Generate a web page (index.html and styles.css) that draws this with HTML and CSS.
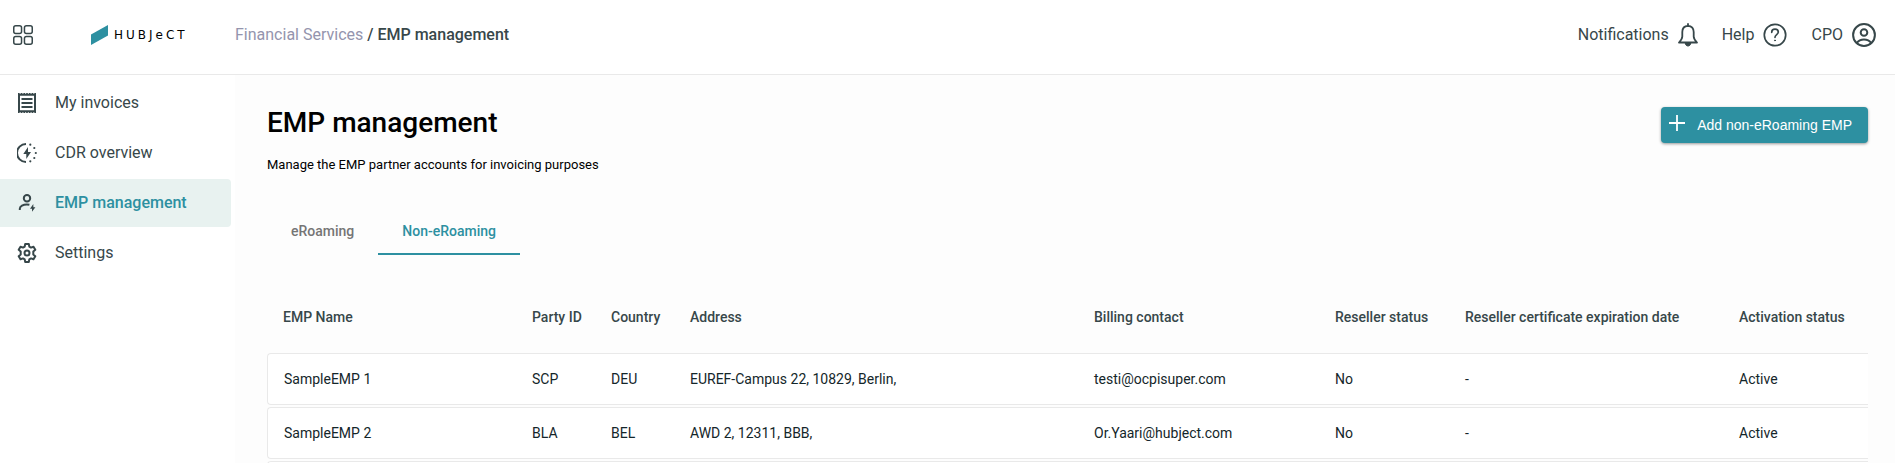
FILE: index.html
```html
<!DOCTYPE html>
<html lang="en">
<head>
    <meta charset="UTF-8">
    <meta name="viewport" content="width=device-width, initial-scale=1.0">
    <title>EMP management</title>
    <link rel="stylesheet" href="styles.css">
</head>
<body>
    <header class="topbar">
        <button class="icon-button" type="button" aria-label="Apps">
            <svg width="20" height="20" viewBox="0 0 20 20" fill="none" stroke="currentColor" stroke-width="1.5">
                <rect x="0.75" y="0.75" width="7.8" height="7.8" rx="2"/>
                <rect x="11.45" y="0.75" width="7.8" height="7.8" rx="2"/>
                <rect x="0.75" y="11.45" width="7.8" height="7.8" rx="2"/>
                <rect x="11.45" y="11.45" width="7.8" height="7.8" rx="2"/>
            </svg>
        </button>
        <a class="logo" href="#home">
            <svg width="17" height="20" viewBox="0 0 17 20">
                <path d="M0 9.5 17 0v10.5L0 20z" fill="#2d90a1"/>
            </svg>
            <span class="logo-text">HUBJeCT</span>
        </a>
        <nav class="breadcrumb">
            <a href="#financial-services">Financial Services</a>
            <span class="current">/ EMP management</span>
        </nav>
        <div class="top-links">
            <a href="#notifications">Notifications
                <svg width="20" height="24" viewBox="0 0 20 24" fill="none" stroke="currentColor" stroke-width="1.8" stroke-linecap="round" stroke-linejoin="round">
                    <path d="M10 1v2M10 2.8C6.2 2.8 4.3 5.600 4.300 9v4.500c0 2-1.200 3.800-3.300 6h18c-2.100-2.200-3.300-4-3.300-6V9c0-3.400-1.900-6.200-5.700-6.200z"/>
                    <path d="M7.200 20c.2 1.900 1.300 3 2.800 3s2.600-1.100 2.800-3z" fill="currentColor" stroke-width="1"/>
                </svg>
            </a>
            <a href="#help">Help
                <svg width="24" height="24" viewBox="0 0 24 24" fill="none" stroke="currentColor" stroke-width="1.7" stroke-linecap="round">
                    <circle cx="12" cy="12" r="10.700"/>
                    <path d="M8.700 9.300c0-2 1.400-3.200 3.300-3.200s3.300 1.200 3.300 3c0 2.500-3.300 2.600-3.300 5.200"/>
                    <circle cx="12" cy="17.400" r="0.500" fill="currentColor" stroke-width="1"/>
                </svg>
            </a>
            <a href="#account">CPO
                <svg width="24" height="24" viewBox="0 0 24 24" fill="none" stroke="currentColor" stroke-width="2">
                    <circle cx="12" cy="12" r="10.900"/>
                    <circle cx="12" cy="9.500" r="3.300"/>
                    <path d="M4.800 19.800c1.700-2.400 4.200-3.400 7.200-3.400s5.500 1 7.200 3.400"/>
                </svg>
            </a>
        </div>
    </header>

    <div class="layout">
        <nav class="sidebar">
            <a href="#invoices">
                <svg width="20" height="20" viewBox="0 0 20 20" fill="none" stroke="currentColor">
                    <path d="M2 1.800v16.400h16V1.800z" stroke-width="2"/>
                    <path d="M1 .7h18M1 19.300h18" stroke-width="1.200" stroke-dasharray="1.600 1.130"/>
                    <path d="M4.500 6h11M4.500 10h11M4.500 14h11" stroke-width="1.800"/>
                </svg>
                <span>My invoices</span>
            </a>
            <a href="#cdr">
                <svg width="20" height="20" viewBox="0 0 20 20">
                    <path d="M9 1A9 9 0 0 0 9 19" fill="none" stroke="currentColor" stroke-width="2"/>
                    <path d="M11 4 6.300 11h3v5l4.700-7h-3z" fill="currentColor"/>
                    <g fill="currentColor">
                        <circle cx="13.300" cy="1.700" r="1.100"/>
                        <circle cx="17.300" cy="5" r="1.100"/>
                        <circle cx="18.800" cy="10" r="1.100"/>
                        <circle cx="17.300" cy="15" r="1.100"/>
                        <circle cx="13.300" cy="18.300" r="1.100"/>
                    </g>
                </svg>
                <span>CDR overview</span>
            </a>
            <a class="active" href="#emp">
                <svg width="20" height="20" viewBox="0 0 20 20">
                    <g fill="none" stroke="currentColor" stroke-width="2">
                        <circle cx="10" cy="5.200" r="3.200"/>
                        <path d="M2.800 17v-1.300c0-2.600 3.500-4.200 7-4.200 1 0 1.700.1 2.600.3"/>
                    </g>
                    <path d="M16.300 11 13 15.700h2v3l3.400-4.500h-2z" fill="currentColor"/>
                </svg>
                <span>EMP management</span>
            </a>
            <a href="#settings">
                <svg width="20" height="20" viewBox="0 0 20 20" fill="none" stroke="currentColor" stroke-width="2" stroke-linejoin="round">
                    <path d="M8.200 1h3.600l.5 2.600 1.700 1 2.500-.9 1.800 3.100-2 1.700v3l2 1.700-1.800 3.100-2.500-.9-1.700 1-.5 2.600H8.200l-.5-2.600-1.700-1-2.500.9-1.800-3.100 2-1.700v-3l-2-1.700 1.800-3.100 2.500.9 1.700-1z"/>
                    <circle cx="10" cy="10" r="2.500"/>
                </svg>
                <span>Settings</span>
            </a>
        </nav>

        <main class="content">
            <div class="page-head">
                <h1>EMP management</h1>
                <button class="add-button" type="button">
                    <svg width="16" height="16" viewBox="0 0 16 16" stroke="currentColor" stroke-width="1.800">
                        <path d="M8 0v16M0 8h16"/>
                    </svg>
                    Add non-eRoaming EMP
                </button>
            </div>
            <p class="description">Manage the EMP partner accounts for invoicing purposes</p>

            <div class="tabs" role="tablist">
                <button type="button" role="tab">eRoaming</button>
                <button class="selected" type="button" role="tab" aria-selected="true">Non-eRoaming</button>
            </div>

            <table class="emp-table">
                <colgroup>
                    <col class="col-name">
                    <col class="col-short">
                    <col class="col-short">
                    <col>
                    <col class="col-contact">
                    <col class="col-reseller">
                    <col class="col-date">
                    <col class="col-status">
                </colgroup>
                <thead>
                    <tr>
                        <th>EMP Name</th>
                        <th>Party ID</th>
                        <th>Country</th>
                        <th>Address</th>
                        <th>Billing contact</th>
                        <th>Reseller status</th>
                        <th>Reseller certificate expiration date</th>
                        <th>Activation status</th>
                    </tr>
                </thead>
                <tbody>
                    <tr>
                        <td>SampleEMP 1</td>
                        <td>SCP</td>
                        <td>DEU</td>
                        <td>EUREF-Campus 22, 10829, Berlin,</td>
                        <td>testi@ocpisuper.com</td>
                        <td>No</td>
                        <td>-</td>
                        <td>Active</td>
                    </tr>
                    <tr>
                        <td>SampleEMP 2</td>
                        <td>BLA</td>
                        <td>BEL</td>
                        <td>AWD 2, 12311, BBB,</td>
                        <td>Or.Yaari@hubject.com</td>
                        <td>No</td>
                        <td>-</td>
                        <td>Active</td>
                    </tr>
                    <tr>
                        <td></td>
                        <td></td>
                        <td></td>
                        <td></td>
                        <td></td>
                        <td></td>
                        <td></td>
                        <td></td>
                    </tr>
                </tbody>
            </table>
        </main>
    </div>
</body>
</html>
```
FILE: styles.css
```css
* {
    box-sizing: border-box;
}

body {
    margin: 0;
    height: 100vh;
    display: flex;
    flex-direction: column;
    overflow: hidden;
    font-family: Roboto, Arial, sans-serif;
    font-size: 16px;
    color: #37474a;
    background-color: #fff;
}

a {
    color: inherit;
    text-decoration: none;
}

button {
    border: 0;
    background: none;
    color: inherit;
    cursor: pointer;
}

svg {
    flex: none;
}

.topbar {
    display: flex;
    align-items: center;
    flex: none;
    height: 75px;
    padding: 0 19px 5px 13px;
    border-bottom: 1px solid #e9e9e9;
}

.icon-button {
    display: flex;
    padding: 0;
}

.logo {
    display: flex;
    align-items: center;
    gap: 6px;
    width: 144px;
    margin-left: 58px;
}

.logo-text {
    font-family: "DejaVu Sans", sans-serif;
    font-size: 12px;
    letter-spacing: 3px;
    color: #000;
}

.breadcrumb a {
    color: #9494ad;
}

.breadcrumb .current {
    font-weight: 500;
}

.top-links {
    display: flex;
    gap: 24px;
    margin-left: auto;
}

.top-links a {
    display: flex;
    align-items: center;
    gap: 9px;
}

.layout {
    display: flex;
    flex: 1;
    min-height: 0;
}

.sidebar {
    display: flex;
    flex-direction: column;
    gap: 2px;
    flex: none;
    width: 235px;
    padding: 4px 4px 0 0;
}

.sidebar a {
    display: flex;
    align-items: center;
    gap: 18px;
    height: 48px;
    padding-left: 17px;
    border-radius: 0 4px 4px 0;
}

.sidebar span {
    padding-bottom: 2px;
}

.sidebar .active {
    background-color: #e8f2f0;
}

.sidebar .active span {
    color: #2d90a1;
    font-weight: 500;
}

.content {
    flex: 1;
    min-width: 0;
    padding: 32px 27px 0 32px;
    overflow: hidden;
    background-color: #fdfdfd;
}

.page-head {
    display: flex;
    justify-content: space-between;
    align-items: center;
    height: 36px;
}

h1 {
    margin: 0;
    padding-bottom: 4px;
    font-size: 28px;
    font-weight: 500;
    line-height: 32px;
    color: #000;
}

.add-button {
    display: flex;
    align-items: center;
    gap: 12px;
    height: 36px;
    padding: 0 16px 0 8px;
    border-radius: 4px;
    background-color: #2d90a1;
    box-shadow: 0 1px 3px rgba(0, 0, 0, 0.4);
    font-family: "Liberation Sans", Arial, sans-serif;
    font-size: 14px;
    color: #fff;
}

.add-button svg {
    margin-bottom: 4px;
}

.description {
    margin: 14px 0 0;
    font-size: 13px;
    line-height: 16px;
    color: #000;
}

.tabs {
    display: flex;
    margin-top: 34px;
}

.tabs button {
    height: 48px;
    padding: 2px 24px 0;
    border-bottom: 2px solid transparent;
    font-family: inherit;
    font-size: 14px;
    font-weight: 500;
    color: #757575;
}

.tabs .selected {
    border-bottom-color: #2d90a1;
    color: #2d90a1;
}

.emp-table {
    width: 100%;
    margin-top: 26px;
    table-layout: fixed;
    border-collapse: separate;
    border-spacing: 0 2px;
    font-size: 14px;
}

.col-name {
    width: 249px;
}

.col-short {
    width: 79px;
}

.col-contact {
    width: 241px;
}

.col-reseller {
    width: 130px;
}

.col-date {
    width: 274px;
}

.col-status {
    width: 145px;
}

.emp-table th,
.emp-table td {
    padding: 0 0 0 16px;
    text-align: left;
    white-space: nowrap;
}

.emp-table th {
    height: 68px;
    font-weight: 500;
}

.emp-table td {
    height: 52px;
    border: solid #e9e9e9;
    border-width: 1px 0;
    background-color: #fff;
    color: #14262a;
}

.emp-table td:first-child {
    border-left-width: 1px;
    border-radius: 4px 0 0 4px;
}
```
